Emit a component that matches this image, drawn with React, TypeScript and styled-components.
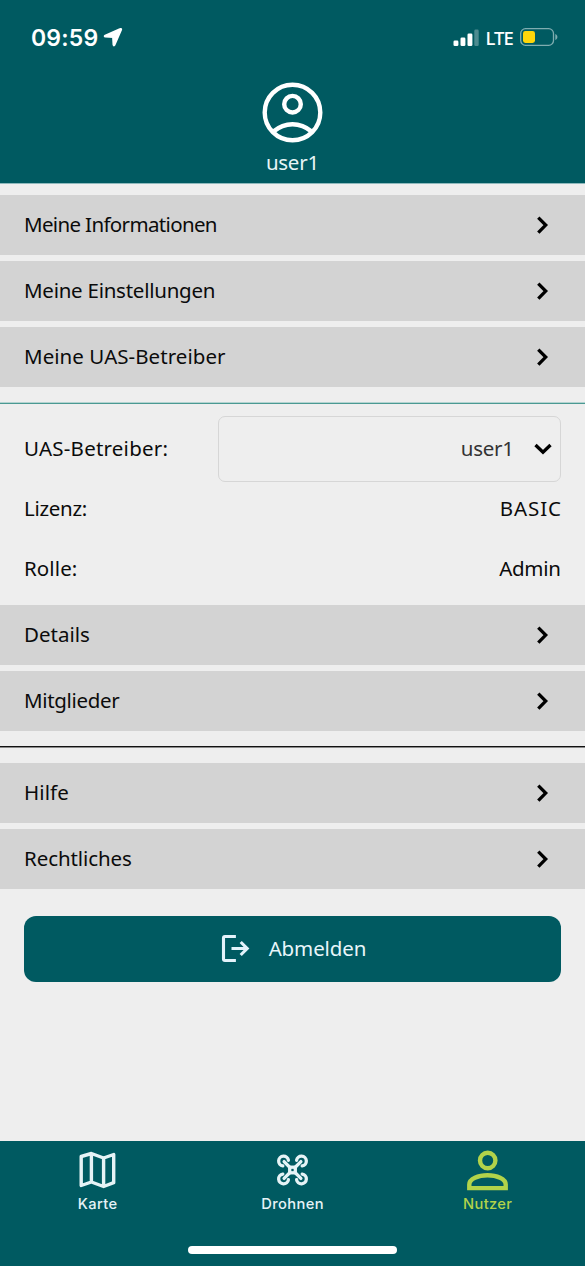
import React from "react";
import styled, { createGlobalStyle } from "styled-components";

const TEAL = "#005a61";
const LIME = "#b2d34a";

const GlobalStyle = createGlobalStyle`
  * { box-sizing: border-box; }
  html, body { margin: 0; padding: 0; background: #eeeeee; }
  svg { display: block; flex: none; overflow: visible; }
`;

const Screen = styled.div`
  width: 585px;
  height: 1266px;
  display: flex;
  flex-direction: column;
  overflow: hidden;
  background: #eeeeee;
  color: #0b0b0b;
  font-family: "Noto Sans", "Open Sans", sans-serif;
  font-size: 20.5px;
  line-height: 30px;
`;

const Header = styled.header`
  height: 184px;
  flex: none;
  background: ${TEAL};
  border-bottom: 1px solid #8fb9bc;
  color: #e8f6f7;
  display: flex;
  flex-direction: column;
  align-items: center;
`;

const StatusBar = styled.div`
  width: 100%;
  height: 82px;
  padding: 0 27px 8px 31px;
  display: flex;
  justify-content: space-between;
  align-items: center;
  color: #ffffff;
`;

const StatusGroup = styled.div`
  display: flex;
  align-items: center;
`;

const Clock = styled.span`
  padding-top: 2px;
  font-family: Inter, sans-serif;
  font-weight: 600;
  font-size: 23px;
  letter-spacing: 0.2px;
  margin-right: 5px;
`;

const Network = styled.span`
  padding-top: 1px;
  font-weight: 500;
  font-size: 18.5px;
  letter-spacing: -0.9px;
  margin: 0 7px 0 6px;
`;

const Text = styled.span<{ $spacing?: number; $color?: string }>`
  white-space: nowrap;
  letter-spacing: ${(p) => p.$spacing ?? 0}px;
  margin-right: ${(p) => -(p.$spacing ?? 0)}px;
  color: ${(p) => p.$color ?? "inherit"};
`;

const UserName = styled.div`
  margin-top: 4px;
`;

const Menu = styled.nav<{ $top: number }>`
  display: flex;
  flex-direction: column;
  gap: 6px;
  margin-top: ${(p) => p.$top}px;
`;

const MenuRow = styled.div`
  height: 60px;
  padding: 0 36px 0 24px;
  background: #d3d3d3;
  display: flex;
  align-items: center;
  justify-content: space-between;

  ${Text} {
    padding-bottom: 2px;
  }
`;

const Divider = styled.div<{ $from: string; $to: string; $top: number }>`
  height: 2px;
  flex: none;
  margin-top: ${(p) => p.$top}px;
  background: ${(p) => p.$to};
  border-top: 1px solid ${(p) => p.$from};
`;

const Operator = styled.section`
  padding: 12px 24px 0;
`;

const Field = styled.div<{ $height: number }>`
  height: ${(p) => p.$height}px;
  display: flex;
  align-items: center;
  justify-content: space-between;

  ${Text} {
    padding-bottom: 2px;
  }
`;

const Select = styled.div`
  width: 343px;
  height: 66px;
  padding-right: 8px;
  border: 1px solid #d6d6d6;
  border-radius: 7px;
  display: flex;
  align-items: center;
  justify-content: flex-end;
  gap: 20px;
`;

const LogoutButton = styled.button`
  margin: 27px 24px 0;
  height: 66px;
  flex: none;
  padding: 0 0 2px 3px;
  border: 0;
  border-radius: 12px;
  background: ${TEAL};
  color: #e8f6fa;
  font: inherit;
  display: flex;
  align-items: center;
  justify-content: center;
  gap: 19px;
`;

const TabBar = styled.footer`
  margin-top: auto;
  height: 125px;
  flex: none;
  background: ${TEAL};
  display: flex;
  flex-direction: column;
  align-items: center;
`;

const Tabs = styled.div`
  width: 100%;
  height: 105px;
  display: grid;
  grid-template-columns: repeat(3, 1fr);
`;

const Tab = styled.div<{ $active?: boolean }>`
  display: flex;
  flex-direction: column;
  align-items: center;
  padding-top: 7px;
  color: ${(p) => (p.$active ? LIME : "#e6f3f6")};
  font-family: Inter, sans-serif;
  font-weight: 500;
  font-size: 14.7px;
  line-height: 20px;
  gap: 4px;
`;

const HomeIndicator = styled.div`
  width: 209px;
  height: 8px;
  border-radius: 4px;
  background: #ffffff;
`;

const LocationArrow = () => (
  <svg width="20" height="20" viewBox="0 0 20 20">
    <path
      d="M17.4 1.9 2.2 8.500c-.9.500-.7 1.100.2 1.200l7.600.4.400 7.600c.1 1 .8 1.100 1.200.2L18.200 2.700c.300-.700-.200-1.100-.800-.800Z"
      fill="#fff"
      stroke="#fff"
      strokeWidth="1.8"
      strokeLinejoin="round"
    />
  </svg>
);

const Signal = () => (
  <svg width="26" height="19" viewBox="0 0 26 19" fill="#fff">
    <rect x="0.5" y="12.5" width="4.9" height="5.5" rx="1.3" />
    <rect x="7.5" y="9.5" width="4.9" height="8.5" rx="1.3" />
    <rect x="14.5" y="5.5" width="4.9" height="12.5" rx="1.3" />
    <rect x="21.3" y="1.6" width="4.4" height="16.4" rx="1.3" opacity="0.3" />
  </svg>
);

const Battery = () => (
  <svg width="38" height="18" viewBox="0 0 38 18">
    <rect x="0.7" y="0.7" width="32.8" height="16.6" rx="4.8" fill="none" stroke="#7fadb0" strokeWidth="1.3" />
    <path d="M35.3 6v6c1.3-.5 2.1-1.7 2.1-3s-.8-2.5-2.1-3Z" fill="#7fadb0" />
    <rect x="3" y="3" width="12" height="12" rx="2.4" fill="#ffd60a" />
  </svg>
);

const ProfileIcon = () => (
  <svg width="61" height="61" viewBox="0 0 61 61" fill="none" stroke="#fff" strokeWidth="4.4">
    <circle cx="30.5" cy="30.5" r="27.8" />
    <circle cx="30.5" cy="22.2" r="8.3" />
    <path d="M11 49.8C17.5 44.5 24 42.3 30.5 42.3S43.5 44.5 50 49.8" />
  </svg>
);

const ChevronRight = () => (
  <svg width="13" height="18" viewBox="0 0 13 18">
    <path d="M2.3 1.6 9.7 9.100 2.300 16.600" fill="none" stroke="#000" strokeWidth="3.3" />
  </svg>
);

const ChevronDown = () => (
  <svg width="18" height="13" viewBox="0 0 18 13">
    <path d="M1.5 2 9 9.3 16.5 2" fill="none" stroke="#000" strokeWidth="3.3" />
  </svg>
);

const LogoutIcon = () => (
  <svg width="28" height="28" viewBox="0 0 28 28" fill="none" stroke="#e4f3fb" strokeWidth="3.1">
    <path d="M13.900 2.500H2.900Q1.500 2.500 1.500 4v21Q1.500 26.500 2.900 26.500h11" />
    <path d="M9.500 14.500h15M18.700 8l6.500 6.500-6.500 6.500" />
  </svg>
);

const MapIcon = () => (
  <svg width="40" height="42" viewBox="0 0 40 42" fill="none" stroke="#e6f3f6" strokeWidth="3.4" strokeLinejoin="round">
    <path d="M3.2 8.500 13.400 5.500 25.600 10 35.700 6.500V34.700L25.600 38.500 13.400 34 3.200 37.500ZM13.400 5.500V34M25.600 10V38.500" />
  </svg>
);

const DroneIcon = () => (
  <svg width="40" height="42" viewBox="0.5 0 40 42" fill="none" stroke="#e6f3f6" strokeWidth="3.3" strokeLinecap="round">
    {[0, 90, 180, 270].map((angle) => (
      <g key={angle} transform={`rotate(${angle} 20 22)`}>
        <path d="M17.5 19.5 11.600 13.600" />
        <path d="M10.300 17.900A4.900 4.900 0 1 1 15.900 12.300" />
      </g>
    ))}
    <rect x="17.200" y="19.200" width="5.600" height="5.600" />
  </svg>
);

const PersonIcon = () => (
  <svg width="42" height="42" viewBox="0.3 0 42 42" fill="none" stroke={LIME} strokeWidth="4.4">
    <circle cx="21" cy="12.500" r="7.700" />
    <path d="M2.600 40.100V36.500C2.600 31 11.500 27.200 20.800 27.200S39 31 39 36.500V40.100Z" />
  </svg>
);

type Item = { label: string; spacing: number };

const MenuList = ({ items, top }: { items: Item[]; top: number }) => (
  <Menu $top={top}>
    {items.map((item) => (
      <MenuRow key={item.label}>
        <Text $spacing={item.spacing}>{item.label}</Text>
        <ChevronRight />
      </MenuRow>
    ))}
  </Menu>
);

export default function App() {
  return (
    <Screen>
      <GlobalStyle />
      <Header>
        <StatusBar>
          <StatusGroup>
            <Clock>09:59</Clock>
            <LocationArrow />
          </StatusGroup>
          <StatusGroup>
            <Signal />
            <Network>LTE</Network>
            <Battery />
          </StatusGroup>
        </StatusBar>
        <ProfileIcon />
        <UserName>
          <Text $spacing={-0.25}>user1</Text>
        </UserName>
      </Header>
      <MenuList
        top={11}
        items={[
          { label: "Meine Informationen", spacing: -0.65 },
          { label: "Meine Einstellungen", spacing: -0.25 },
          { label: "Meine UAS-Betreiber", spacing: 0.05 },
        ]}
      />
      <Divider $top={15} $from="#b4d3d0" $to="#4a9992" />
      <Operator>
        <Field $height={66}>
          <Text $spacing={0.22}>UAS-Betreiber:</Text>
          <Select>
            <Text $spacing={-0.25} $color="#333">
              user1
            </Text>
            <ChevronDown />
          </Select>
        </Field>
        <Field $height={54}>
          <Text $spacing={-0.3}>Lizenz:</Text>
          <Text $spacing={0.9}>BASIC</Text>
        </Field>
        <Field $height={66}>
          <Text $spacing={0.1}>Rolle:</Text>
          <Text $spacing={-0.25}>Admin</Text>
        </Field>
      </Operator>
      <MenuList
        top={3}
        items={[
          { label: "Details", spacing: 0 },
          { label: "Mitglieder", spacing: -0.33 },
        ]}
      />
      <Divider $top={15} $from="#111111" $to="#8a8a8a" />
      <MenuList
        top={15}
        items={[
          { label: "Hilfe", spacing: 0.1 },
          { label: "Rechtliches", spacing: -0.08 },
        ]}
      />
      <LogoutButton>
        <LogoutIcon />
        <Text $spacing={-0.12}>Abmelden</Text>
      </LogoutButton>
      <TabBar>
        <Tabs>
          <Tab>
            <MapIcon />
            <Text $spacing={0.35}>Karte</Text>
          </Tab>
          <Tab>
            <DroneIcon />
            <Text $spacing={0.4}>Drohnen</Text>
          </Tab>
          <Tab $active>
            <PersonIcon />
            <Text $spacing={0.35}>Nutzer</Text>
          </Tab>
        </Tabs>
        <HomeIndicator />
      </TabBar>
    </Screen>
  );
}
